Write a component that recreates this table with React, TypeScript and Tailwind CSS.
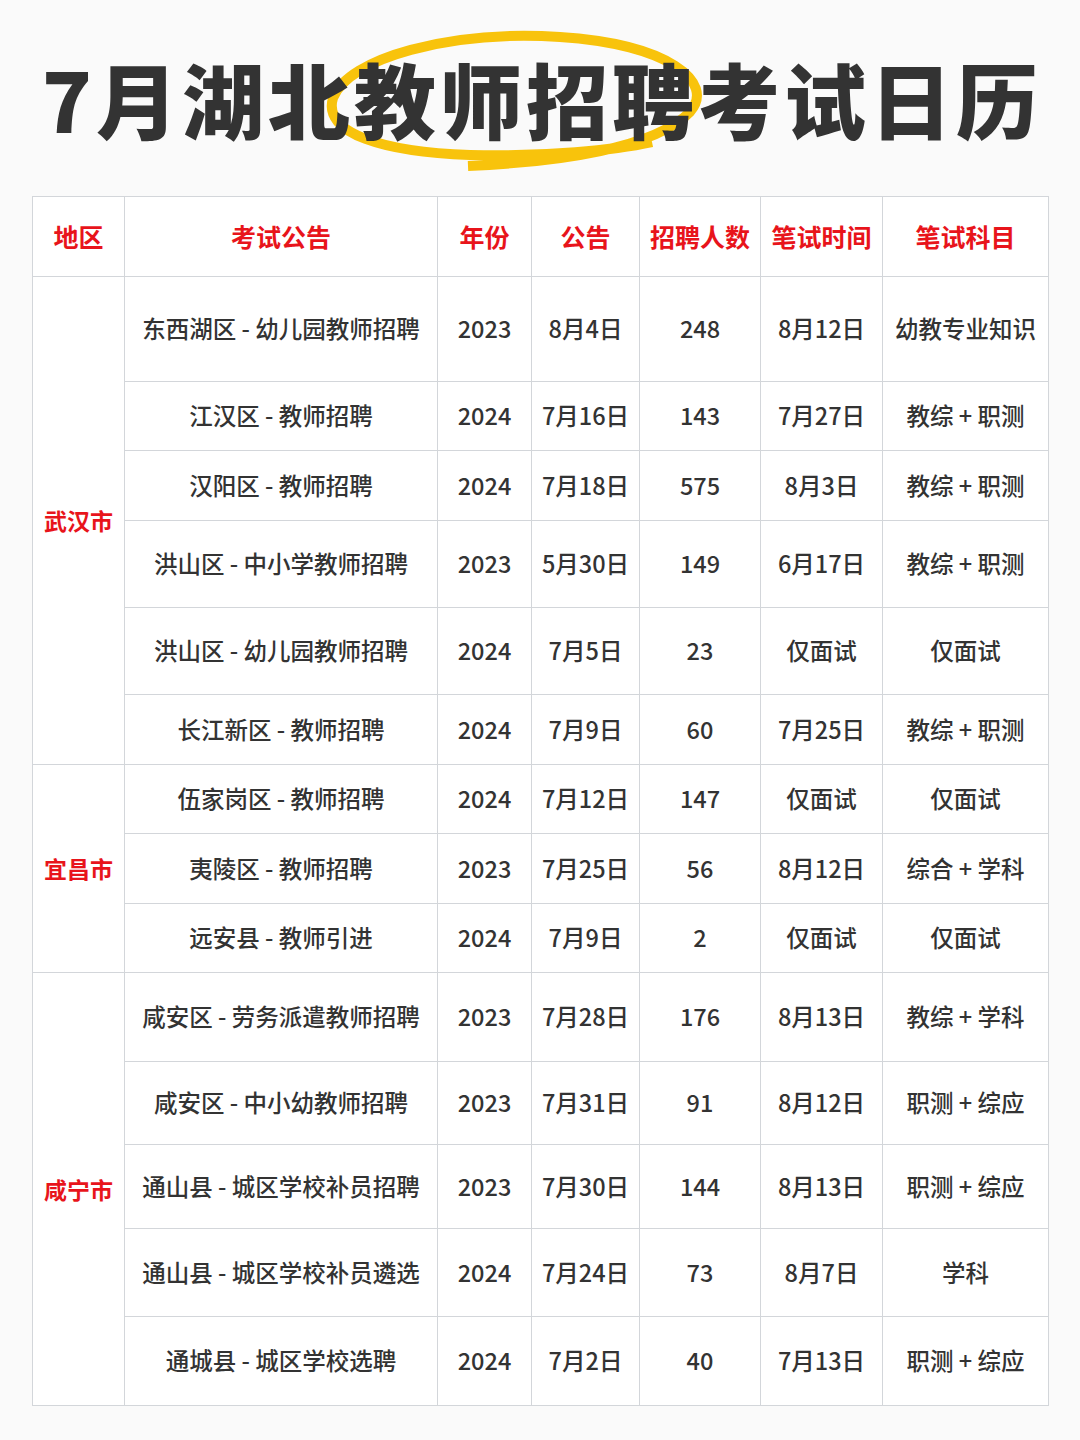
import React from "react";

const FONT = { fontFamily: '"Noto Sans CJK SC", "Noto Sans", sans-serif' };

type Row = {
  title: string;
  year: string;
  notice: string;
  count: string;
  examDate: string;
  subject: string;
  h: string;
  region?: { name: string; span: number };
};

const rows: Row[] = [
  { region: { name: "武汉市", span: 6 }, title: "东西湖区 - 幼儿园教师招聘", year: "2023", notice: "8月4日", count: "248", examDate: "8月12日", subject: "幼教专业知识", h: "h-[105px]" },
  { title: "江汉区 - 教师招聘", year: "2024", notice: "7月16日", count: "143", examDate: "7月27日", subject: "教综 + 职测", h: "h-[69px]" },
  { title: "汉阳区 - 教师招聘", year: "2024", notice: "7月18日", count: "575", examDate: "8月3日", subject: "教综 + 职测", h: "h-[70px]" },
  { title: "洪山区 - 中小学教师招聘", year: "2023", notice: "5月30日", count: "149", examDate: "6月17日", subject: "教综 + 职测", h: "h-[87px]" },
  { title: "洪山区 - 幼儿园教师招聘", year: "2024", notice: "7月5日", count: "23", examDate: "仅面试", subject: "仅面试", h: "h-[87px]" },
  { title: "长江新区 - 教师招聘", year: "2024", notice: "7月9日", count: "60", examDate: "7月25日", subject: "教综 + 职测", h: "h-[70px]" },
  { region: { name: "宜昌市", span: 3 }, title: "伍家岗区 - 教师招聘", year: "2024", notice: "7月12日", count: "147", examDate: "仅面试", subject: "仅面试", h: "h-[69px]" },
  { title: "夷陵区 - 教师招聘", year: "2023", notice: "7月25日", count: "56", examDate: "8月12日", subject: "综合 + 学科", h: "h-[70px]" },
  { title: "远安县 - 教师引进", year: "2024", notice: "7月9日", count: "2", examDate: "仅面试", subject: "仅面试", h: "h-[69px]" },
  { region: { name: "咸宁市", span: 5 }, title: "咸安区 - 劳务派遣教师招聘", year: "2023", notice: "7月28日", count: "176", examDate: "8月13日", subject: "教综 + 学科", h: "h-[89px]" },
  { title: "咸安区 - 中小幼教师招聘", year: "2023", notice: "7月31日", count: "91", examDate: "8月12日", subject: "职测 + 综应", h: "h-[83px]" },
  { title: "通山县 - 城区学校补员招聘", year: "2023", notice: "7月30日", count: "144", examDate: "8月13日", subject: "职测 + 综应", h: "h-[84px]" },
  { title: "通山县 - 城区学校补员遴选", year: "2024", notice: "7月24日", count: "73", examDate: "8月7日", subject: "学科", h: "h-[88px]" },
  { title: "通城县 - 城区学校选聘", year: "2024", notice: "7月2日", count: "40", examDate: "7月13日", subject: "职测 + 综应", h: "h-[89px]" },
];

const headers = ["地区", "考试公告", "年份", "公告", "招聘人数", "笔试时间", "笔试科目"];

const cell = "border border-[#d3d6da] text-center align-middle p-0";

export default function App() {
  return (
    <div className="w-[1080px] h-[1440px] bg-[#fafafa] text-[#333333]" style={FONT}>
      {/* title */}
      <div className="relative h-[196px] flex items-center justify-center">
        <svg className="absolute inset-0" width="1080" height="196" viewBox="0 0 1080 196" fill="none">
          <path
            d="M 468 166 C 560 162 655 148 690 112 C 716 82 668 44 560 37 C 450 30 348 58 333 98 C 322 134 385 152 470 155 C 545 157 615 150 652 142"
            stroke="#f8c30c"
            strokeWidth="10"
            strokeLinecap="butt"
          />
        </svg>
        <h1 className="relative z-10 whitespace-nowrap text-[82px] leading-none font-black tracking-[4px] pl-[4px]">
          7月湖北教师招聘考试日历
        </h1>
      </div>

      {/* table */}
      <table className="ml-[32px] w-[1016px] table-fixed border-collapse bg-white">
        <colgroup>
          <col className="w-[92px]" />
          <col className="w-[313px]" />
          <col className="w-[94px]" />
          <col className="w-[108px]" />
          <col className="w-[121px]" />
          <col className="w-[122px]" />
          <col className="w-[166px]" />
        </colgroup>
        <thead>
          <tr className="h-[80px]">
            {headers.map((h) => (
              <th key={h} className={`${cell} text-[25px] font-bold text-[#e8141b] whitespace-nowrap`}>
                {h}
              </th>
            ))}
          </tr>
        </thead>
        <tbody className="text-[23.5px] font-medium">
          {rows.map((r) => (
            <tr key={r.title} className={r.h}>
              {r.region && (
                <td rowSpan={r.region.span} className={`${cell} text-[23px] font-bold text-[#e8141b]`}>
                  {r.region.name}
                </td>
              )}
              <td className={`${cell} whitespace-nowrap`}>{r.title}</td>
              <td className={cell}>{r.year}</td>
              <td className={cell}>{r.notice}</td>
              <td className={cell}>{r.count}</td>
              <td className={cell}>{r.examDate}</td>
              <td className={`${cell} whitespace-nowrap`}>{r.subject}</td>
            </tr>
          ))}
        </tbody>
      </table>
    </div>
  );
}
